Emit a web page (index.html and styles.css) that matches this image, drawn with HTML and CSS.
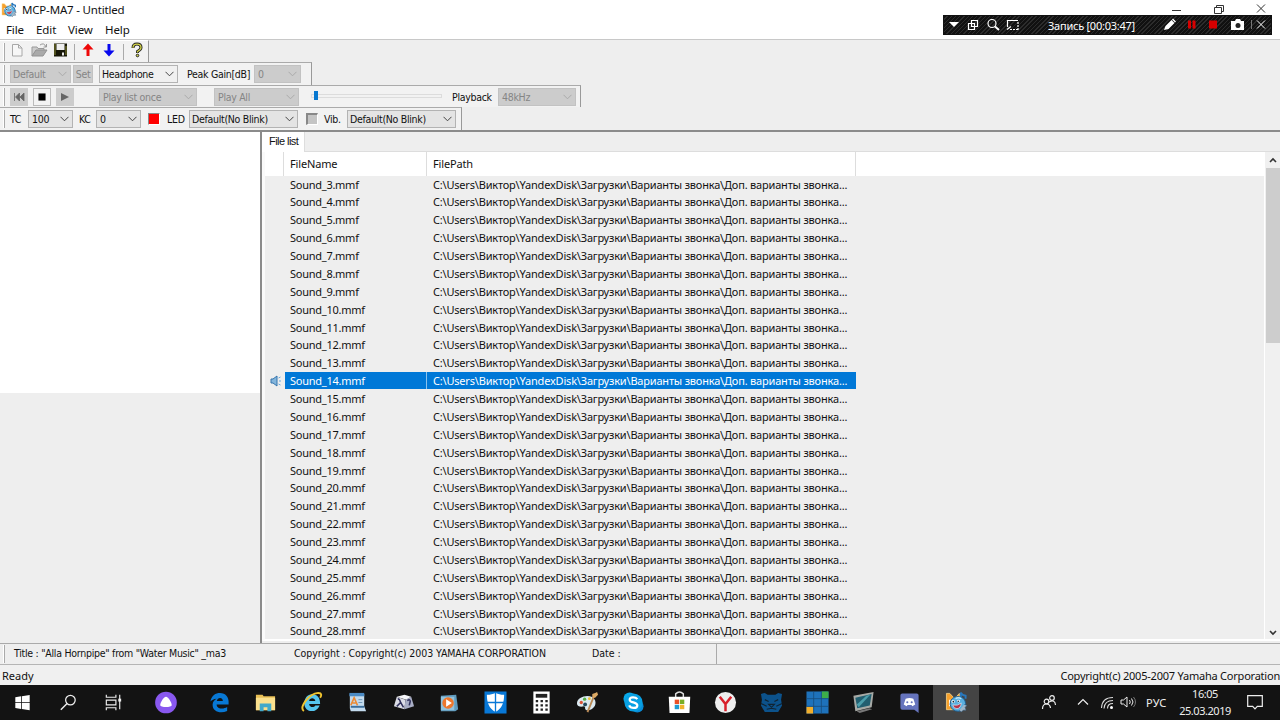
FILE: index.html
```html
<!DOCTYPE html>
<html lang="ru">
<head>
    <meta charset="UTF-8">
    <title>MCP-MA7 - Untitled</title>
    <link rel="stylesheet" href="styles.css">
</head>
<body>
    <svg class="defs">
        <symbol id="mascot" viewBox="0 0 24 24">
            <path d="M1.500 2.500h3.500l5 5.500 5-5.500v17H1.500z" fill="#f6a02c" stroke="#fbd98d" stroke-width=".8"/>
            <path d="M5 9v7" stroke="#fff" stroke-width="1.500"/>
            <path d="M16.500 9V1.500q1 3 5 3.500v3" fill="none" stroke="#2878bd" stroke-width="2"/>
            <path d="M6 10q3-5 9-4 6 1 6.500 7 0 5-4.500 7.500-7 2-10.500-3Q4.500 14 6 10z" fill="#59afe0" stroke="#1d5c8e"/>
            <path d="M20 14l3 1-2 2 1 3-3 0-2 2-2-2" fill="#9fb6c9" stroke="#35597a" stroke-width=".6"/>
            <path d="M11 8q3-2 6 0" fill="none" stroke="#b7e3fa" stroke-width="1.500"/>
            <circle cx="8.500" cy="11" r="1.700" fill="#fff"/>
            <circle cx="14" cy="10.500" r="1.500" fill="#fff"/>
            <circle cx="8.700" cy="11.200" r=".9" fill="#123"/>
            <circle cx="13.800" cy="10.800" r=".8" fill="#123"/>
            <path d="M8 14.500q5 1.500 9-2-.5 5.500-4.500 6-3.500 0-4.500-4z" fill="#b93348" stroke="#d9f1fc" stroke-width=".7"/>
        </symbol>
        <symbol id="arrow" viewBox="0 0 9 6"><path d="M.5 .8l4 4 4-4" fill="none" stroke="currentColor" stroke-width="1"/></symbol>
    </svg>

    <header class="titlebar">
        <svg class="app-icon"><use href="#mascot"/></svg>
        <span class="title">MCP-MA7 - Untitled</span>
        <svg class="window-buttons" viewBox="0 0 92 14">
            <path d="M0 7.500h9M42.500 4.500h7v6h-7zM44.500 4V2.500h7v6H50M85 1.500l8 8M93 1.500l-8 8" fill="none" stroke="#333"/>
        </svg>
    </header>
    <nav class="menu">
        <span class="m-file">File</span><span class="m-edit">Edit</span><span class="m-view">View</span><span class="m-help">Help</span>
    </nav>

    <div class="recorder">
        <svg class="rec-left" viewBox="0 0 76 20">
            <path d="M5 7h10l-5 5z" fill="#fff"/>
            <g fill="none" stroke="#fff" stroke-width="1.200">
                <path d="M27.500 5.500h6v6h-6zM24.500 8.500h6v6h-6z"/>
                <circle cx="48" cy="8.500" r="4"/><path d="M51 11.500l4 3.500" stroke-width="2"/>
                <path d="M63.500 12V5.500H74"/><path d="M63 14.500l4-3" /><path d="M66 14.500h8M74 7v8" stroke-dasharray="2 1"/>
            </g>
        </svg>
        <span class="rec-time">Запись [00:03:47]</span>
        <svg class="rec-right" viewBox="0 1 110 20">
            <path d="M1 16l1.500-4 6-6 3 3-6 6zM9 5.500l1-1 3 3-1 1z" fill="#fff"/>
            <path d="M25 6.500h3v8h-3zM29.500 6.500h3v8h-3zM46 6.500h8v8h-8z" fill="#d80000"/>
            <path d="M68 7h4l1-2h4l1 2h3v9H68z" fill="#fff"/><circle cx="75" cy="11.500" r="2.500" fill="#222"/>
            <path d="M88.500 6v9" stroke="#777"/><path d="M94 6.500l8 8M102 6.500l-8 8" stroke="#fff"/>
        </svg>
    </div>

    <section class="toolbars">
        <div class="bar bar-main">
            <i class="grip"></i>
            <svg class="tool" viewBox="1 1 22 20"><path d="M7.500 4.500h6l3.500 3.500v8H7.500zM13.500 4.500V8H17" fill="#f7f7f7" stroke="#a8a8a8"/></svg>
            <svg class="tool" viewBox="0 1 22 20"><path d="M4 16V7h5l1 1.500h6V11" fill="#ccc" stroke="#999"/><path d="M4 16l4-6h11l-4 6z" fill="#aaa" stroke="#929292"/><path d="M12 5q4-3 6 2M18.500 4v3h-3" fill="none" stroke="#999"/></svg>
            <svg class="tool" viewBox="0 1 22 20"><path d="M4 3.500h13v13H4z" fill="#181808"/><path d="M6.500 4h8v6h-8z" fill="#eee"/><path d="M5 4v11M16 6v9" stroke="#8b8b35"/><path d="M12 12.500h2v3h-2z" fill="#eee"/></svg>
            <i class="sep"></i>
            <svg class="tool" viewBox="0 1 22 20"><path d="M11 3.500l5.500 6h-4v6.500h-3V9.500h-4z" fill="#ee0808"/></svg>
            <svg class="tool" viewBox="1 1 22 20"><path d="M11 16.500l5.500-6h-4V4h-3v6.500h-4z" fill="#0808ee"/></svg>
            <i class="sep"></i>
            <svg class="tool" viewBox="0 1 22 20"><path d="M7 8q0-4 4-4t4 3.500q0 2-3.500 4V13" fill="none" stroke="#222" stroke-width="3"/><path d="M7 7.800q0-3.600 4-3.600t4 3.300q0 2-3.500 4v1" fill="none" stroke="#d4d448" stroke-width="1.300"/><circle cx="11.500" cy="15.500" r="1.300" fill="#d4d448" stroke="#222"/></svg>
        </div>

        <div class="bar bar-output">
            <i class="grip"></i>
            <span class="combo off c-preset">Default<svg><use href="#arrow"/></svg></span>
            <span class="button c-set">Set</span>
            <span class="combo white c-out">Headphone<svg><use href="#arrow"/></svg></span>
            <span class="label l-peak">Peak Gain[dB]</span>
            <span class="combo off c-gain">0<svg><use href="#arrow"/></svg></span>
        </div>

        <div class="bar bar-play">
            <i class="grip"></i>
            <svg class="play-btn" viewBox="0 0 18 18"><path d="M4.500 5v8M9.500 5v8l-4-4zM14 5v8l-4-4z" fill="#666" stroke="#666" stroke-width=".8"/></svg>
            <svg class="play-btn active" viewBox="0 0 18 18"><path d="M5 5h8v8H5z" fill="#000"/></svg>
            <svg class="play-btn" viewBox="0 0 18 18"><path d="M5 5v8l8-4z" fill="#666"/></svg>
            <span class="combo off c-mode">Play list once<svg><use href="#arrow"/></svg></span>
            <span class="combo off c-all">Play All<svg><use href="#arrow"/></svg></span>
            <span class="slider"><i class="thumb"></i></span>
            <span class="label l-playback">Playback</span>
            <span class="combo off c-rate">48kHz<svg><use href="#arrow"/></svg></span>
        </div>

        <div class="bar bar-led">
            <i class="grip"></i>
            <span class="label l-tc">TC</span>
            <span class="combo c-tc">100<svg><use href="#arrow"/></svg></span>
            <span class="label l-kc">KC</span>
            <span class="combo c-kc">0<svg><use href="#arrow"/></svg></span>
            <i class="check red"></i>
            <span class="label l-led">LED</span>
            <span class="combo c-blink">Default(No Blink)<svg><use href="#arrow"/></svg></span>
            <i class="check vib"></i>
            <span class="label l-vib">Vib.</span>
            <span class="combo c-blink2">Default(No Blink)<svg><use href="#arrow"/></svg></span>
        </div>
    </section>

    <main class="workspace">
        <aside class="side"><div class="side-view"></div></aside>
        <section class="files">
            <div class="tabs"><span class="tab">File list</span></div>
            <div class="file-area">
                <div class="list">
                    <div class="list-head"><span></span><span class="h-name">FileName</span><span class="h-path">FilePath</span></div>
                    <div id="rows"></div>
                </div>
                <div class="scrollbar">
                    <svg class="sb-arrow" viewBox="0 0 14 16"><path d="M4 10l3-3 3 3" fill="none" stroke="#333" stroke-width="1.600"/></svg>
                    <div class="sb-thumb"></div>
                    <svg class="sb-arrow sb-down" viewBox="0 0 14 16"><path d="M4 8l3 3 3-3" fill="none" stroke="#333" stroke-width="1.600"/></svg>
                </div>
            </div>
        </section>
    </main>

    <div class="infobar">
        <i class="grip"></i>
        <span class="i-title">Title : "Alla Hornpipe" from "Water Music" _ma3</span>
        <span class="i-copy">Copyright : Copyright(c) 2003 YAMAHA CORPORATION</span>
        <span class="i-date">Date :</span>
    </div>
    <div class="statusbar"><span class="s-ready">Ready</span><span class="s-copy">Copyright(c) 2005-2007 Yamaha Corporation</span></div>

    <footer class="taskbar">
        <div class="t-item t-start"><svg viewBox="0 0 24 24"><path d="M4.500 6.500l6-1v6.200h-6zM11.300 5.400l8.200-1.200v7.500h-8.200zM4.500 12.500h6v6.200l-6-1zM11.300 12.500h8.200V20l-8.200-1.200z" fill="#fff"/></svg></div>
        <div class="t-item t-search"><svg viewBox="0 0 24 24"><circle cx="14" cy="9.500" r="5" fill="none" stroke="#eee" stroke-width="1.300"/><path d="M10.500 13L4 19.500" stroke="#eee" stroke-width="1.500"/></svg></div>
        <div class="t-item t-view"><svg viewBox="0 0 24 24"><path d="M4.500 4v2.500h10V4M4.500 9.500h10v5h-10zM4.500 20v-2.500h10V20M18.500 4v15" fill="none" stroke="#eee" stroke-width="1.200"/><path d="M17 8h3v3h-3z" fill="#eee"/></svg></div>
        <div class="t-item t-alice"><svg viewBox="0 0 24 24"><circle cx="12.500" cy="12" r="11.300" fill="#8958ef"/><path d="M12.500 6c2.500 0 6 6.300 6 8.500 0 3-12 3-12 0C6.500 12.300 10 6 12.500 6z" fill="#fff"/></svg></div>
        <div class="t-apps">
            <div class="t-item"><svg viewBox="0 0 24 24"><path d="M2.500 11C3.500 4.500 8 2 12.500 2c6 0 9 4.500 9 9v3H9c.3 5 7 5.300 11 2.800v4C13 24 4.500 21.500 4.800 14c.2-3 2-5 4.200-6-3 .3-5 1.500-6.500 3zM9.200 10.500h6.300c0-4.300-5.700-4.300-6.300 0z" fill="#0878d4" fill-rule="evenodd"/></svg></div>
            <div class="t-item"><svg viewBox="0 0 24 24"><path d="M2 4h7l1 1.500h12V20H2z" fill="#e9bf54"/><path d="M2 7h20v13H2z" fill="#fbe08d"/><path d="M6 21v-8h12v8h-4v-4h-4v4z" fill="#42a9ca"/></svg></div>
            <div class="t-item"><svg viewBox="0 0 24 24"><path d="M12.500 3.500c6 0 8.500 4 8.500 10H9.500c.5 4 5 4 6.500 1.500h4.500C17 24 4.500 22.500 4.500 13c0-5.500 3.500-9.500 8-9.500zM9.500 10.500h6.500c-.5-4-6-4-6.500 0z" fill="#55c5ef" fill-rule="evenodd"/><path d="M4 21C-1 17 9 3 19 2c4 0 3.500 3 2 5" fill="none" stroke="#f1c42f" stroke-width="2"/></svg></div>
            <div class="t-item"><svg viewBox="0 0 24 24"><path d="M4 3h15v13l2 5H5l-1-3z" fill="#c3dbee"/><path d="M3.500 2h15.500v3.500h-15.500z" fill="#4b8bc4"/><path d="M5 15l3.500-8 3.500 8M6.500 12.500h4" fill="none" stroke="#ec8b35" stroke-width="1.700"/><path d="M13 9h4M13 12h4" stroke="#6e96b8"/><path d="M5 16.500h14" stroke="#3c6f9d" stroke-width="2"/></svg></div>
            <div class="t-item"><svg viewBox="0 0 24 24"><path d="M5 6l8-2 7 2-5 3z" fill="#f7f7fa"/><path d="M5 6l9 3-1 10-11-3z" fill="#dcdde6"/><path d="M14 9l6-3 3 10-10 3z" fill="#a9aec5"/><path d="M6 8q2 0 3 4l3 5M9 12l-4 4M16 10q3-2 3 1l-1 4" fill="none" stroke="#30315c" stroke-width="1.600"/></svg></div>
            <div class="t-item"><svg viewBox="0 0 24 24"><path d="M3 5l16-1 2 15-3 2H3z" fill="#609bbd"/><path d="M3 6h14v14H3z" fill="#91c2dc"/><circle cx="10.500" cy="12.500" r="6" fill="#ed772d"/><path d="M8.500 8.500v8l6-4z" fill="#fff"/></svg></div>
            <div class="t-item"><svg viewBox="0 0 24 24"><path d="M.5 .5h23v23H.5z" fill="#0878d7"/><path d="M3 4c4 0 6-1 9-2 3 1 5 2 9 2 0 8-2 14-9 18C5 18 3 12 3 4z" fill="#fff"/><path d="M12 1v22M2 12h20" stroke="#0878d7" stroke-width="1.400"/></svg></div>
            <div class="t-item"><svg viewBox="0 0 24 24"><path d="M3.500 .5h17v23h-17z" fill="#fff"/><path d="M6 3h12v4H6z" fill="#222"/><path d="M6 10.500h13M6 15h13M6 19.500h13" stroke="#222" stroke-width="2.400" stroke-dasharray="2.500 2.500"/></svg></div>
            <div class="t-item"><svg viewBox="0 0 24 24"><path d="M1 13C1 5 17 2 20 10c2 6-4 11-9 10-3-1 0-4-3-4-3 1-7 0-7-3z" fill="#dbe9f0"/><circle cx="5.500" cy="12" r="1.700" fill="#db5237"/><circle cx="9" cy="8.500" r="1.700" fill="#58af47"/><circle cx="14" cy="8" r="1.500" fill="#efbd35"/><circle cx="9.500" cy="14" r="2" fill="#24475e"/><path d="M12 22L18.500 6" stroke="#b98a56" stroke-width="2"/><path d="M17 7l0-4 3-1 2-1 1 3-3 3z" fill="#dba965"/></svg></div>
            <div class="t-item"><svg viewBox="0 0 24 24"><circle cx="8" cy="8" r="6.500" fill="#08a9e9"/><circle cx="16" cy="16" r="6.500" fill="#088bd7"/><circle cx="12" cy="12" r="9.500" fill="#08a0e3"/><path d="M16 8.500C14 5.800 8 6 8 9c0 3.800 8 2 8 6 0 3.500-7 3.500-8.500 0" fill="none" stroke="#fff" stroke-width="2.300"/></svg></div>
            <div class="t-item"><svg viewBox="0 0 24 24"><path d="M8 7V3q4-4 8 0v4" fill="none" stroke="#ddd" stroke-width="1.500"/><path d="M.8 6h22.400l-.8 17H1.600z" fill="#fff"/><path d="M7 9h4.600v4.600H7z" fill="#e95027"/><path d="M12.400 9H17v4.600h-4.600z" fill="#7aae25"/><path d="M7 14.400h4.600V19H7z" fill="#1f9bd2"/><path d="M12.400 14.400H17V19h-4.600z" fill="#f1b32d"/></svg></div>
            <div class="t-item"><svg viewBox="0 0 24 24"><circle cx="12" cy="12" r="11" fill="#eee"/><path d="M6 6l6 7.500L18 6M12 13v8" fill="none" stroke="#d8202b" stroke-width="2.600"/></svg></div>
            <div class="t-item"><svg viewBox="0 0 24 24"><path d="M1 3l4-1 3 2h8l3-2 4 1-1 6 1 6-4 7H5l-4-7 1-6z" fill="#0c528b"/><path d="M5 9l4 2M19 9l-4 2M9 14h6l-3 3zM7 19l5-1 5 1M1 13l6 3M23 13l-6 3" fill="none" stroke="#102332" stroke-width="1.200"/></svg></div>
            <div class="t-item"><svg viewBox="0 0 24 24"><path d="M.5 .5h23v23H.5z" fill="#1e72bb"/><path d="M16.500 .5h7v7h-7z" fill="#3dad49"/><path d="M.5 16.500h7v7h-7z" fill="#f2ae2b"/><path d="M8 .5v23M16 .5v23M.5 8h23M.5 16h23" stroke="#174a78" stroke-width=".8"/></svg></div>
            <div class="t-item"><svg viewBox="0 0 24 24"><path d="M1.500 5L22.500 1l-2 16-17 4z" fill="#a7aaa6"/><path d="M3.500 7l17-4-2 12-13 3z" fill="#225f70"/><path d="M5 14L15 5l4-1-12 13z" fill="#4b9fac"/><path d="M5 21l13-3 3 1-13 4z" fill="#777"/></svg></div>
            <div class="t-item"><svg viewBox="0 0 24 24"><path d="M4.500 2.500h15q2 0 2 2v18.500L17 19.500H4.500q-2 0-2-2v-13q0-2 2-2z" fill="#6674bd"/><path d="M8 8q4-1.500 8 0l2 6-3 2-1-1.500h-4L9 16l-3-2z" fill="#fff"/><circle cx="9.700" cy="11.700" r="1.100" fill="#6674bd"/><circle cx="14.300" cy="11.700" r="1.100" fill="#6674bd"/></svg></div>
            <div class="t-item current"><svg><use href="#mascot"/></svg></div>
        </div>
        <div class="tray">
            <svg class="people" viewBox="0 0 16 16"><g fill="none" stroke="#eee" stroke-width="1.200"><circle cx="5.500" cy="7.500" r="2.300"/><path d="M1.500 15q0-5 4-5 3.500 0 4 4"/><circle cx="11" cy="4" r="2.300"/><path d="M8 8q6-3 6.500 3"/></g></svg>
            <svg class="chev" viewBox="0 0 12 16"><path d="M1 10.500l5-5 5 5" fill="none" stroke="#eee" stroke-width="1.200"/></svg>
            <svg class="wifi" viewBox="0 0 14 16"><g fill="none" stroke="#ddd" stroke-width="1.100"><path d="M1.500 14Q2 3.500 13 3.500M4 14.500Q4.500 6.500 13 6.500M7.500 14.500q0-5 5.500-5"/></g><circle cx="11.500" cy="13.500" r="1.500" fill="#fff"/></svg>
            <svg class="sound" viewBox="0 0 16 16"><path d="M1 6h2.500L7 3v10l-3.500-3H1z" fill="none" stroke="#eee"/><path d="M9.500 6q1.500 2 0 4M11.500 4.500q3 3.500 0 7" fill="none" stroke="#eee"/><path d="M13.500 3q4 5 0 10" fill="none" stroke="#777"/></svg>
            <span class="lang">РУС</span>
            <div class="clock"><span class="time">16:05</span><span class="date">25.03.2019</span></div>
            <svg class="notes" viewBox="0 0 16 16"><path d="M.7 1.700h14.600v10.600h-5L8 14.800l-2.300-2.500h-5z" fill="none" stroke="#eee" stroke-width="1.200"/></svg>
        </div>
    </footer>

    <script>
        const rows = document.getElementById("rows");
        const path = "C:\\Users\\Виктор\\YandexDisk\\Загрузки\\Варианты звонка\\Доп. варианты звонка...";
        const speaker = '<svg class="speaker" viewBox="0 0 12 12"><path d="M1 4h2l4-3v10L3 8H1z" fill="#83b5dc" stroke="#3475ad"/><path d="M8.500 3l2-1M9 6h2M8.500 9l2 1" stroke="#6aa9dc"/></svg>';

        for (let i = 3; i <= 28; i++) {
            const row = document.createElement("div");
            row.className = i === 14 ? "row selected" : "row";
            row.innerHTML = `
                <span class="mark">${i === 14 ? speaker : ""}</span>
                <span class="name">Sound_${i}.mmf</span>
                <span class="path">${path}</span>
            `;
            rows.appendChild(row);
        }
    </script>
</body>
</html>
```
FILE: styles.css
```css
* {
    box-sizing: border-box;
}

body {
    margin: 0;
    width: 1280px;
    height: 720px;
    overflow: hidden;
    display: flex;
    flex-direction: column;
    background: #eee;
    color: #111;
    font-family: "Noto Sans", sans-serif;
    font-size: 11px;
    white-space: nowrap;
}

svg {
    display: block;
    flex: none;
}

.defs {
    position: absolute;
    width: 0;
    height: 0;
}

/* title and menu */
.titlebar {
    height: 19px;
    background: #fff;
    display: flex;
    align-items: center;
}

.app-icon {
    width: 16px;
    height: 16px;
    margin-left: 1px;
}

.title {
    margin-left: 5px;
    font-size: 11.5px;
    letter-spacing: -0.18px;
}

.window-buttons {
    width: 92px;
    height: 14px;
    margin-left: auto;
    margin-right: 16px;
    overflow: visible;
}

.menu {
    height: 20px;
    background: #fff;
    display: flex;
    align-items: center;
    padding-left: 6px;
    font-size: 11.5px;
    line-height: 21px;
    letter-spacing: -0.1px;
}

.m-file {
    width: 30px;
}

.m-edit {
    width: 32px;
}

.m-view {
    width: 37px;
}

.recorder {
    position: absolute;
    left: 943px;
    top: 15px;
    width: 329px;
    height: 20px;
    display: flex;
    align-items: center;
    color: #fff;
    border: 1px solid #111;
    background: repeating-linear-gradient(135deg, #111 0 2px, #2c2c2c 2px 3px);
}

.rec-left {
    width: 76px;
    height: 20px;
}

.rec-time {
    width: 87px;
    margin-left: 28px;
    font-size: 11px;
    letter-spacing: -0.25px;
}

.rec-right {
    width: 110px;
    height: 20px;
    margin-left: 28px;
}

/* toolbars */
.toolbars {
    height: 91px;
    border-top: 1px solid #c8c8c8;
    font-family: "DejaVu Sans Condensed", "DejaVu Sans", sans-serif;
    font-stretch: condensed;
    font-size: 10.5px;
    letter-spacing: -0.3px;
}

.bar {
    display: flex;
    align-items: center;
    background: #f2f2f2;
    border-right: 1px solid #999;
    border-top: 1px solid #fff;
}

.bar-main {
    width: 149px;
    height: 22px;
}

.bar-output {
    width: 312px;
    height: 23px;
    border-top-color: #aaa;
}

.bar-play {
    width: 581px;
    height: 22px;
    border-top-color: #aaa;
}

.bar-led {
    width: 462px;
    height: 23px;
    border-top-color: #aaa;
}

.grip {
    flex: none;
    width: 2px;
    height: 18px;
    margin-left: 3px;
    border-right: 1px solid #aaa;
    background: #fff;
}

.tool {
    width: 22px;
    height: 20px;
}

.bar-main .tool {
    margin-top: -2px;
}

.grip + .tool {
    margin-left: 1px;
}

.sep {
    width: 1px;
    height: 16px;
    margin: 0 2px;
    background: #aaa;
}

.combo {
    flex: none;
    height: 18px;
    display: flex;
    align-items: center;
    justify-content: space-between;
    padding: 0 3px 0 3px;
    border: 1px solid #b3b3b3;
    background: #e4e4e4;
}

.combo svg {
    width: 9px;
    height: 6px;
    color: #444;
}

.combo.white {
    background: #f0f0f0;
}

.combo.off {
    background: #ccc;
    border-color: #c2c2c2;
    color: #858585;
}

.combo.off svg {
    color: #aaa;
}

.label {
    flex: none;
}

.c-preset {
    width: 61px;
    margin-left: 5px;
    padding-left: 2px;
}

.button {
    width: 20px;
    height: 18px;
    line-height: 17px;
    margin-left: 2px;
    text-align: center;
    background: #ccc;
    border: 1px solid #c2c2c2;
    color: #858585;
}

.c-out {
    width: 79px;
    margin-left: 6px;
    padding-left: 2px;
}

.l-peak {
    width: 67px;
    margin-left: 9px;
}

.c-gain {
    width: 47px;
}

.play-btn {
    width: 18px;
    height: 18px;
    margin-left: 5px;
    background: #ccc;
}

.play-btn.active {
    background: #f3f3f3;
    border: 1px solid #bbb;
}

.c-mode {
    width: 98px;
    margin-left: 25px;
}

.c-all {
    width: 85px;
    margin-left: 17px;
}

.slider {
    width: 131px;
    height: 4px;
    margin-left: 12px;
    margin-top: -2px;
    border: 1px solid #dcdcdc;
    display: flex;
    align-items: center;
}

.thumb {
    flex: none;
    width: 4px;
    height: 9px;
    margin-left: 2px;
    background: #0878d0;
}

.l-playback {
    width: 46px;
    margin-left: 10px;
}

.c-rate {
    width: 78px;
}

.l-tc {
    width: 18px;
    margin-left: 5px;
}

.c-tc {
    width: 45px;
}

.l-kc {
    width: 17px;
    margin-left: 6px;
}

.c-kc {
    width: 45px;
}

.check {
    flex: none;
    width: 12px;
    height: 12px;
    margin-left: 7px;
    background: #c4c4c4;
    border: 2px solid #888;
    border-right: 1px solid #fff;
    border-bottom: 1px solid #fff;
}

.check.red {
    background: #f00;
    border-width: 1px;
}

.check.vib {
    margin-left: 8px;
}

.l-led {
    width: 22px;
    margin-left: 7px;
}

.l-vib {
    width: 23px;
    margin-left: 6px;
}

.c-blink,
.c-blink2 {
    width: 109px;
    padding-left: 2px;
}

/* work area */
.workspace {
    height: 514px;
    display: flex;
    border-top: 2px solid #8b8b8b;
    border-bottom: 1px solid #aaa;
}

.side {
    width: 260px;
}

.side-view {
    height: 261px;
    background: #fff;
}

.files {
    width: 1020px;
    border-left: 2px solid #8b8b8b;
    background: #eee;
}

.tabs {
    height: 20px;
    border-bottom: 1px solid #ddd;
}

.tab {
    display: block;
    width: 43px;
    height: 20px;
    padding-left: 7px;
    line-height: 19px;
    background: #fff;
    border-right: 1px solid #ddd;
    font-family: "Liberation Sans", sans-serif;
    letter-spacing: -0.55px;
}

.file-area {
    display: flex;
    height: 489px;
    border-left: 3px solid #fafafa;
    border-bottom: 2px solid #fff;
}

.list {
    width: 999px;
    background: #eee;
    overflow: hidden;
}

.list-head,
.row {
    display: grid;
    grid-template-columns: 19px 143px 429px;
}

.list-head {
    height: 23.5px;
    background: #fff;
    line-height: 23px;
}

.list-head span {
    border-right: 1px solid #ddd;
}

.h-name,
.h-path,
.name,
.path {
    padding-left: 6px;
}

.h-name,
.h-path {
    letter-spacing: -0.15px;
}

.name {
    letter-spacing: -0.26px;
}

.path {
    letter-spacing: -0.19px;
}

.row {
    height: 17.88px;
    line-height: 17.5px;
}

.mark {
    display: flex;
    align-items: center;
    padding-left: 5px;
}

.speaker {
    width: 12px;
    height: 12px;
}

.selected .name,
.selected .path {
    height: 17px;
    background: #0078d7;
    color: #fff;
}

.selected .name {
    border-left: 1px solid #eee;
    padding-left: 5px;
    border-right: 1px solid #8bc3ee;
}

.scrollbar {
    width: 16px;
    padding-left: 1px;
    display: flex;
    flex-direction: column;
    background: #f0f0f0;
    border-left: 1px solid #fff;
}

.sb-arrow {
    width: 14px;
    height: 16px;
}

.sb-thumb {
    width: 14px;
    height: 175px;
    background: #cdcdcd;
}

.sb-down {
    margin-top: auto;
}

/* song info and status */
.infobar {
    width: 717px;
    height: 20px;
    display: flex;
    align-items: center;
    border-right: 1px solid #aaa;
    font-family: "DejaVu Sans Condensed", "DejaVu Sans", sans-serif;
    font-stretch: condensed;
    font-size: 10.5px;
    line-height: 12px;
    letter-spacing: -0.27px;
}

.infobar span {
    margin-top: -2px;
}

.i-title {
    width: 280px;
    margin-left: 9px;
}

.i-copy {
    width: 298px;
    letter-spacing: -0.07px;
}

.i-date {
    letter-spacing: 0;
}

.statusbar {
    height: 20.5px;
    padding: 3px 0 0 2px;
    display: flex;
    justify-content: space-between;
    border-top: 1px solid #b5b5b5;
    background: #f0f0f0;
}

.s-copy {
    letter-spacing: -0.22px;
}

/* taskbar */
.taskbar {
    height: 35.5px;
    display: flex;
    background: #131313;
    color: #eee;
}

.t-item {
    flex: none;
    display: flex;
    align-items: center;
    justify-content: center;
    height: 35.5px;
}

.t-item svg {
    width: 23px;
    height: 23px;
}

.t-start,
.t-view {
    width: 45px;
}

.t-search {
    width: 46px;
}

.t-alice {
    width: 58px;
}

.t-apps {
    flex: none;
    width: 784px;
    margin-left: 2px;
    display: flex;
}

.t-apps .t-item {
    width: 46.07px;
}

.t-apps .current {
    background: #444;
}

.tray {
    display: flex;
    align-items: center;
    padding-left: 61px;
}

.people {
    width: 16px;
    height: 16px;
}

.chev {
    width: 12px;
    height: 16px;
    margin-left: 20px;
}

.wifi {
    width: 14px;
    height: 16px;
    margin-left: 11px;
}

.sound {
    width: 16px;
    height: 16px;
    margin-left: 6px;
}

.lang {
    width: 24px;
    margin-left: 10px;
    letter-spacing: 0.2px;
}

.clock {
    width: 70px;
    display: flex;
    flex-direction: column;
    align-items: center;
    line-height: 17px;
    letter-spacing: -0.45px;
}

.notes {
    width: 16px;
    height: 16px;
    margin-left: 7px;
}
```
